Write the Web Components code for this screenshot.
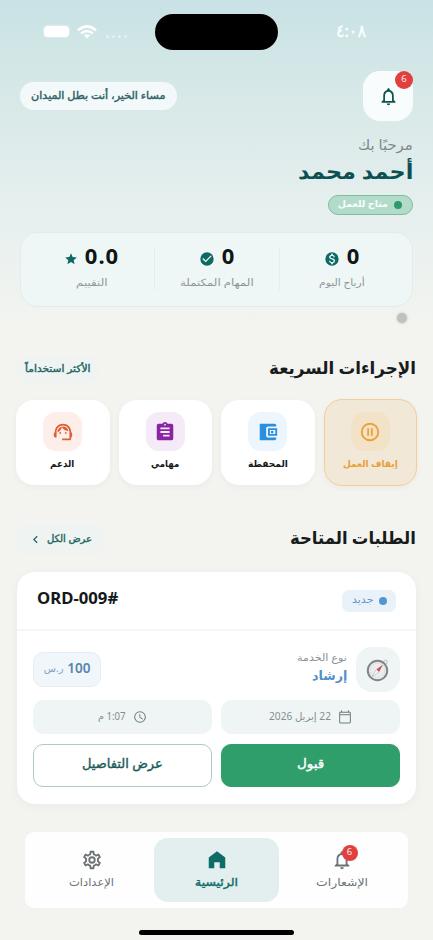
<!DOCTYPE html>
<html lang="ar" dir="rtl">
<head>
<meta charset="utf-8">
<title>الرئيسية</title>
<style>
html,body{margin:0;padding:0}
body{width:433px;height:940px;overflow:hidden;font-family:"Noto Sans","DejaVu Sans",sans-serif}
</style>
</head>
<body>
<worker-app></worker-app>
<script>
const ICONS = {
  bell:'<path d="M12 22c1.1 0 2-.9 2-2h-4c0 1.100.9 2 2 2zm6-6v-5c0-3.070-1.630-5.640-4.500-6.320V4c0-.83-.67-1.500-1.500-1.500s-1.500.67-1.500 1.500v.68C7.640 5.360 6 7.920 6 11v5l-2 2v1h16v-1l-2-2zm-2 1H8v-6c0-2.480 1.510-4.500 4-4.500s4 2.020 4 4.500v6z"/>',
  dollar:'<path fill-rule="evenodd" d="M12 2a10 10 0 1 0 0 20 10 10 0 0 0 0-20zm1.410 16.090V20h-2.670v-1.930c-1.710-.36-3.160-1.460-3.270-3.400h1.960c.1 1.050.82 1.870 2.650 1.870 1.960 0 2.400-.98 2.400-1.590 0-.83-.44-1.610-2.670-2.140-2.480-.6-4.180-1.620-4.180-3.670 0-1.720 1.390-2.840 3.110-3.210V4h2.670v1.950c1.860.45 2.790 1.860 2.850 3.390H14.300c-.05-1.110-.64-1.870-2.220-1.870-1.500 0-2.400.68-2.400 1.640 0 .84.65 1.390 2.670 1.910s4.180 1.390 4.180 3.910c-.01 1.830-1.380 2.830-3.120 3.160z"/>',
  check:'<path fill-rule="evenodd" d="M12 2a10 10 0 1 0 0 20 10 10 0 0 0 0-20zm-2 15l-5-5 1.410-1.410L10 14.170l7.590-7.590L19 8l-9 9z"/>',
  star:'<path d="M12 17.270L18.180 21l-1.640-7.030L22 9.240l-7.190-.61L12 2 9.190 8.630 2 9.240l5.460 4.730L5.820 21z"/>',
  pause:'<path d="M9 16h2V8H9v8zm3-14a10 10 0 1 0 0 20 10 10 0 0 0 0-20zm0 18a8 8 0 1 1 0-16 8 8 0 0 1 0 16zm1-4h2V8h-2v8z"/>',
  wallet:'<path d="M21 18v1c0 1.100-.9 2-2 2H3V3h16c1.100 0 2 .9 2 2v1h-9c-1.110 0-2 .9-2 2v8c0 1.100.89 2 2 2h9z"/><path fill-rule="evenodd" d="M12 8h10v8H12zm2 1.800v4.400h6V9.800z"/><circle cx="16.500" cy="12" r="1.500"/>',
  tasks:'<path fill-rule="evenodd" d="M19 3h-4.180C14.400 1.840 13.300 1 12 1s-2.400.84-2.820 2H5a2 2 0 0 0-2 2v14c0 1.100.9 2 2 2h14a2 2 0 0 0 2-2V5a2 2 0 0 0-2-2zm-7 0a1 1 0 1 1 0 2 1 1 0 0 1 0-2zm5 14h-7v-2h7v2zm0-4H7v-2h10v2zm0-4H7V7h10v2z"/>',
  agent:'<path d="M21 12.220C21 6.730 16.740 3 12 3c-4.690 0-9 3.650-9 9.280-.6.340-1 .98-1 1.720v2c0 1.100.9 2 2 2h1v-6.100c0-3.870 3.130-7 7-7s7 3.130 7 7V19h-8v2h8c1.100 0 2-.9 2-2v-1.220c.59-.31 1-.92 1-1.640v-2.300c0-.7-.41-1.310-1-1.620z"/><circle cx="9" cy="13" r="1"/><circle cx="15" cy="13" r="1"/><path d="M18 11.030C17.520 8.180 15.040 6 12.050 6c-3.030 0-6.290 2.510-6.030 6.450 2.470-1.010 4.330-3.210 4.860-5.890 1.310 2.630 4 4.440 7.120 4.470z"/>',
  chevron:'<path d="M15.410 7.410L14 6l-6 6 6 6 1.410-1.410L10.830 12z"/>',
  calendar:'<path d="M20 3h-1V1h-2v2H7V1H5v2H4a2 2 0 0 0-2 2v16c0 1.100.9 2 2 2h16a2 2 0 0 0 2-2V5a2 2 0 0 0-2-2zm.3 18.300H3.700V9h16.600v12.300zm0-14H3.700V4.800h16.600v2.500z"/>',
  clock:'<path d="M12 2a10 10 0 1 0 0 20 10 10 0 0 0 0-20zm0 18.200a8.200 8.200 0 1 1 0-16.400 8.200 8.200 0 0 1 0 16.400zM12.500 7H11v6l5.200 3.100.8-1.200-4.500-2.700z"/>',
  home:'<path d="M12 2.500L3 9.200V21h6v-6.500h6V21h6V9.200z"/>',
  gear:'<path d="M19.430 12.980c.04-.32.07-.64.07-.98s-.03-.66-.07-.98l2.110-1.650c.19-.15.24-.42.12-.64l-2-3.460a.5.5 0 0 0-.61-.22l-2.490 1a7.300 7.300 0 0 0-1.690-.98l-.38-2.650A.49.49 0 0 0 14 2h-4a.49.49 0 0 0-.49.42l-.38 2.650c-.61.25-1.170.59-1.690.98l-2.490-1a.5.5 0 0 0-.61.22l-2 3.460c-.13.22-.07.49.12.64l2.110 1.650c-.04.32-.07.65-.07.98s.03.66.07.98l-2.110 1.650c-.19.15-.24.42-.12.64l2 3.460c.12.22.39.3.61.22l2.490-1c.52.4 1.080.73 1.690.98l.38 2.650c.03.24.24.42.49.42h4c.25 0 .46-.18.49-.42l.38-2.650c.61-.25 1.170-.59 1.690-.98l2.490 1c.23.09.49 0 .61-.22l2-3.460a.5.5 0 0 0-.12-.64l-2.110-1.650zm-1.980-1.710c.04.31.05.52.05.73s-.02.43-.05.73l-.14 1.130.89.7 1.080.84-.7 1.210-1.270-.51-1.040-.42-.9.680c-.43.320-.84.560-1.250.730l-1.060.430-.16 1.130-.2 1.350h-1.400l-.19-1.350-.16-1.130-1.060-.43c-.43-.18-.83-.41-1.230-.71l-.91-.7-1.060.43-1.270.51-.7-1.210 1.080-.84.89-.7-.14-1.130c-.03-.31-.05-.54-.05-.74s.02-.43.05-.73l.14-1.130-.89-.7-1.080-.84.7-1.210 1.270.51 1.040.42.9-.68c.43-.32.84-.56 1.250-.73l1.060-.43.16-1.130.2-1.350h1.390l.19 1.350.16 1.130 1.060.43c.43.18.83.41 1.230.71l.91.7 1.060-.43 1.270-.51.7 1.210-1.070.85-.89.7.14 1.130zM12 8a4 4 0 1 0 0 8 4 4 0 0 0 0-8zm0 6a2 2 0 1 1 0-4 2 2 0 0 1 0 4z"/>'
};

class Base extends HTMLElement {
  mount(html){ this.attachShadow({mode:'open'}).innerHTML = html; }
  a(n,d=''){ return this.getAttribute(n) ?? d; }
}

/* Icon by name, drawn in the current colour. */
customElements.define('ui-icon', class extends Base {
  connectedCallback(){
    const s=this.a('size','18');
    this.mount(`<style>:host{display:block;flex:none;width:${s}px;height:${s}px}svg{display:block;width:100%;height:100%;fill:currentColor}</style><svg viewBox="0 0 24 24">${ICONS[this.a('name')]}</svg>`);
  }
});

/* One line of text condensed or widened to a given width; weight "medium" is regular with a thin outline. */
customElements.define('fit-text', class extends Base {
  connectedCallback(){
    const w=+this.a('w'), s=+this.a('size','12'), wt=this.a('weight','400'), med=wt==='medium';
    this.mount(`<style>:host{display:block;flex:none;width:${w}px;height:${Math.round(s*1.5)}px;font-size:${s}px;line-height:${Math.round(s*1.5)}px;font-weight:${med?400:wt};color:${this.a('color','inherit')}}
    span{display:inline-block;white-space:nowrap;transform-origin:100% 50%;${med?'-webkit-text-stroke:.4px currentColor':''}}</style><span><slot></slot></span>`);
    const fit=()=>{const sp=this.shadowRoot.querySelector('span');const n=sp.offsetWidth;if(n)sp.style.transform=`scaleX(${w/n})`;};
    requestAnimationFrame(fit); fit();
  }
});

customElements.define('status-bar', class extends Base {
  connectedCallback(){ this.mount(`<style>
    :host{display:grid;grid-template-columns:155px 123px 155px;direction:ltr;height:71px;box-sizing:border-box;padding-top:14px;color:#fff}
    .l{display:flex;align-items:center;padding-left:44px;height:35px}
    .bat{width:23px;height:9px;border-radius:4px;background:#fff;border:1px solid #ffffffb0;box-shadow:0 0 2px #fff}
    svg{margin-left:8px}
    .dots{display:flex;gap:3px;margin:9px 0 0 9px}.dots i{width:3px;height:3px;border-radius:50%;background:#ffffff70}
    .island{background:#000;border-radius:18px;height:36px}
    .r{padding:4px 0 0 58px;direction:rtl;display:flex;justify-content:flex-end}
    </style>
    <div class="l"><div class="bat"></div><svg width="20" height="14" viewBox="0 0 20 14" fill="none" stroke="#fff" stroke-width="2.600"><path d="M1 5.200Q10-2.600 19 5.200M4.200 8.400Q10 3.600 15.800 8.400"/><path d="M10 13.500L6.900 10.300Q10 8 13.100 10.300z" fill="#fff" stroke="none"/></svg><div class="dots"><i></i><i></i><i></i><i></i></div></div>
    <div class="island"></div>
    <div class="r"><fit-text w="30" size="17" weight="medium">٤:٠٨</fit-text></div>`); }
});

customElements.define('count-badge', class extends Base {
  connectedCallback(){ const s=this.a('size','18'); this.mount(`<style>:host{display:flex;justify-content:center;width:${s}px;height:${s}px;border-radius:50%;background:#e0413f;color:#ffe9e6;font-size:9.500px;line-height:${s-3}px}</style><slot></slot>`); }
});

customElements.define('app-header', class extends Base {
  connectedCallback(){ this.mount(`<style>
    :host{display:block;padding:0 20px;height:161px}
    .top{display:flex;justify-content:space-between;align-items:center;height:50px}
    .bell{position:relative;width:50px;height:50px;border-radius:17px;background:#f8fcfd;display:grid;place-items:center;color:#0c5450}
    count-badge{position:absolute;top:0;right:0}
    .greet{width:157px;height:28px;border-radius:14px;background:#f3f9fb;display:flex;justify-content:center;align-items:center;box-sizing:border-box;padding-bottom:2px}
    .hi{margin-top:13px}.name{margin-top:0}
    .pill{margin-top:8px;width:85px;height:20px;box-sizing:border-box;border:1px solid #7fbda0;border-radius:10px;background:#b3dbc9;display:flex;align-items:center;padding-right:10px;gap:6px}
    .pill i{width:8px;height:8px;border-radius:50%;background:#2f9a6b}.pill fit-text{margin-top:-2px}
    </style>
    <div class="top"><div class="bell"><ui-icon name="bell" size="21"></ui-icon><count-badge>6</count-badge></div>
    <div class="greet"><fit-text w="134" size="10.500" weight="medium" color="#2e6264">مساء الخير، أنت بطل الميدان</fit-text></div></div>
    <fit-text class="hi" w="55" size="14" color="#7f898b">مرحبًا بك</fit-text>
    <fit-text class="name" w="115" size="21" weight="700" color="#0d4f52">أحمد محمد</fit-text>
    <div class="pill"><i></i><fit-text w="50" size="9.500" weight="700" color="#f4fffa">متاح للعمل</fit-text></div>`); }
});

customElements.define('stat-item', class extends Base {
  connectedCallback(){ this.mount(`<style>
    :host{display:flex;flex-direction:column;align-items:center;height:42px}
    .v{display:flex;align-items:center;justify-content:center;gap:6px;height:22px;margin-top:-4px}
    ui-icon{color:#0c6a63;margin-top:7px}.n{font:700 22px/22px "Noto Sans",sans-serif;color:#101516;letter-spacing:1px;padding-left:1px}
    fit-text{margin-top:9px}
    </style><div class="v"><span class="n">${this.a('value')}</span><ui-icon name="${this.a('icon')}" size="${this.a('isize','15')}"></ui-icon></div>
    <fit-text w="${this.a('w')}" size="10" color="#8c9799">${this.a('label')}</fit-text>`); }
});

customElements.define('stats-card', class extends Base {
  connectedCallback(){ this.mount(`<style>
    :host{display:grid;grid-template-columns:repeat(3,1fr);margin:0 20px;height:75px;box-sizing:border-box;padding:15px 8px 0;border:1px solid #e3ecec;border-radius:18px;background:#eff6f6}
    ::slotted(*:not(:last-child)){border-left:1px solid #e4ecec}
    </style><slot></slot>`); }
});

customElements.define('section-head', class extends Base {
  connectedCallback(){ const ch=this.a('chevron'); this.mount(`<style>
    :host{display:flex;justify-content:space-between;align-items:center;height:31px;padding:0 17px}
    .title{margin-top:${ch?-5:-4}px}
    .chip{display:flex;align-items:center;justify-content:center;gap:4px;width:${ch?86:82}px;height:${ch?31:26}px;border-radius:9px;background:#eff4f3;color:#226664}
    .chip fit-text{margin-top:${ch?-2:-1}px}
    </style><fit-text class="title" w="${this.a('w')}" size="17.500" weight="700" color="#171b1c">${this.a('title')}</fit-text>
    <div class="chip"><fit-text w="${this.a('aw')}" size="10" weight="medium">${this.a('action')}</fit-text>${ch?'<ui-icon name="chevron" size="15"></ui-icon>':''}</div>`); }
});

customElements.define('action-tile', class extends Base {
  connectedCallback(){ const on=this.hasAttribute('active'); this.mount(`<style>
    :host{display:flex;flex-direction:column;align-items:center;height:${on?87:85}px;box-sizing:border-box;padding-top:12px;border-radius:18px;
      background:${on?'#f2e8d7':'#fff'};${on?'border:1.500px solid #f3cf98;margin-top:-1px;':''}box-shadow:0 2px 6px #0000000a}
    .i{width:39px;height:39px;border-radius:13px;display:grid;place-items:center;background:${this.a('tint')};color:${this.a('tone')}}
    fit-text{margin-top:6px}
    </style><div class="i"><ui-icon name="${this.a('icon')}" size="${this.a('isize','22')}"></ui-icon></div>
    <fit-text w="${this.a('w')}" size="9.500" weight="700" color="${on?'#e7a13a':'#15191a'}">${this.a('label')}</fit-text>`); }
});

customElements.define('action-grid', class extends Base {
  connectedCallback(){ this.mount(`<style>:host{display:grid;grid-template-columns:repeat(4,1fr);gap:9px;margin:16px 16px 0 16px;height:86px;align-items:start}</style><slot></slot>`); }
});

/* Tinted box that holds an icon and a line of text. */
customElements.define('meta-box', class extends Base {
  connectedCallback(){ this.mount(`<style>:host{display:flex;align-items:center;justify-content:center;gap:7px;height:34px;border-radius:11px;background:#eff5f5;color:#70787a}fit-text{margin-top:-2px}</style>
    <ui-icon name="${this.a('icon')}" size="14"></ui-icon><fit-text w="${this.a('w')}" size="10" color="#858d90">${this.a('label')}</fit-text>`); }
});

customElements.define('ui-button', class extends Base {
  connectedCallback(){ const p=this.hasAttribute('primary'); this.mount(`<style>:host{display:flex;align-items:center;justify-content:center;height:43px;box-sizing:border-box;padding-bottom:4px;border-radius:10px;border:1px solid ${p?'#2f9e6a':'#b3c7c7'};background:${p?'#2f9e6a':'#fff'};color:${p?'#fff':'#1c5c5a'}}</style>
    <fit-text w="${this.a('w')}" size="12.500" weight="medium">${this.a('label')}</fit-text>`); }
});

customElements.define('order-card', class extends Base {
  connectedCallback(){ this.mount(`<style>
    :host{display:block;margin:17px 17px 0;height:232px;border-radius:18px;background:#fff;box-shadow:0 2px 10px #0000000b}
    .h{display:flex;justify-content:space-between;align-items:center;height:59px;box-sizing:border-box;padding:0 20px;border-bottom:2px solid #f4f6f6}
    .tag{display:flex;align-items:center;gap:6px;width:54px;height:22px;border-radius:7px;background:#eaf2f9;box-sizing:border-box;padding-right:9px}
    .tag i{width:8px;height:8px;border-radius:50%;background:#5596d0}.tag fit-text{margin-top:-2px}
    .h>fit-text{margin-top:-6px}
    .s{display:flex;height:45px;padding:0 16px;margin-top:16px;align-items:center}
    .c{width:44px;height:45px;border-radius:16px;background:#eff4f4;display:grid;place-items:center}
    .t{margin:-4px 9px 0 auto;flex:1}.t fit-text+fit-text{margin-top:0}
    .p{display:flex;align-items:center;justify-content:center;gap:4px;width:68px;height:35px;box-sizing:border-box;border:1px solid #e5edf5;border-radius:10px;background:#f1f6fb;color:#5386ad;padding-bottom:3px}
    .g{display:grid;grid-template-columns:1fr 1fr;gap:9px;padding:0 16px;margin-top:8px}.g+.g{margin-top:10px}
    </style>
    <div class="h"><div class="tag"><i></i><fit-text w="21" size="10" color="#5f95c4">جديد</fit-text></div><fit-text w="81" size="16.500" weight="700" color="#15191a">#ORD-009</fit-text></div>
    <div class="s"><div class="c"><svg width="24" height="24" viewBox="0 0 24 24"><circle cx="19.500" cy="4" r="1.800" fill="none" stroke="#bcc1c3"/><circle cx="11.500" cy="12.500" r="9.700" fill="#e9eded" stroke="#818589" stroke-width="2"/><circle cx="11.500" cy="12.500" r="7.300" fill="none" stroke="#ccd1d3" stroke-dasharray="1 1.500"/><path d="M17 6.500L13 14l-2.700-2.600z" fill="#d94a50"/><path d="M6 18.500l4.300-7.100L13 14z" fill="#fafafa" stroke="#a4a6a8" stroke-width=".5"/></svg></div>
    <div class="t"><fit-text w="50" size="10" color="#899296">نوع الخدمة</fit-text><fit-text w="35" size="13" weight="700" color="#5290c8">إرشاد</fit-text></div>
    <div class="p"><fit-text w="23" size="13.500" weight="600">100</fit-text><fit-text w="20" size="10" color="#7ba2c1">ر.س</fit-text></div></div>
    <div class="g"><meta-box icon="calendar" w="62" label="22 إبريل 2026"></meta-box><meta-box icon="clock" w="28" label="1:07 م"></meta-box></div>
    <div class="g"><ui-button primary w="27" label="قبول"></ui-button><ui-button w="81" label="عرض التفاصيل"></ui-button></div>`); }
});

customElements.define('nav-tab', class extends Base {
  connectedCallback(){ const on=this.hasAttribute('active'), b=this.a('badge'); this.mount(`<style>
    :host{display:flex;flex-direction:column;align-items:center;height:64px;box-sizing:border-box;padding-top:11px;border-radius:14px;color:${on?'#0d6c67':'#6b7375'};background:${on?'#e3eeee':'transparent'}}
    .i{position:relative}count-badge{position:absolute;left:11px;top:-4px}fit-text{margin-top:2px}
    </style><div class="i"><ui-icon name="${this.a('icon')}" size="22"></ui-icon>${b?`<count-badge size="16">${b}</count-badge>`:''}</div>
    <fit-text w="${this.a('w')}" size="11" weight="${on?'medium':400}">${this.a('label')}</fit-text>`); }
});

customElements.define('bottom-nav', class extends Base {
  connectedCallback(){ this.mount(`<style>:host{display:grid;grid-template-columns:repeat(3,1fr);margin:28px 25px 0;height:76px;box-sizing:border-box;padding:6px 4px;border-radius:9px;background:#fefefe}</style><slot></slot>`); }
});

customElements.define('worker-app', class extends Base {
  connectedCallback(){ this.mount(`<style>
    :host{display:block;width:433px;height:940px;background:linear-gradient(#c9e2e5 0,#d6e8e7 90px,#e7f0ef 220px,#f3f4f0 330px)}
    .dot{width:10px;height:10px;margin:6px 26px 0 0;border-radius:50%;background:#bfc1c0;box-shadow:0 0 2px 1px #d9dbd9}
    .first{margin-top:30px}.second{margin-top:38px}
    .home{width:155px;height:5px;border-radius:3px;background:#000;margin:22px auto 0}
    </style>
    <status-bar></status-bar>
    <app-header></app-header>
    <stats-card>
      <stat-item value="0" icon="dollar" isize="16" label="أرباح اليوم" w="46"></stat-item>
      <stat-item value="0" icon="check" isize="16" label="المهام المكتملة" w="74"></stat-item>
      <stat-item value="0.0" icon="star" isize="14" label="التقييم" w="32"></stat-item>
    </stats-card>
    <div class="dot"></div>
    <section-head class="first" title="الإجراءات السريعة" w="147" action="الأكثر استخداماً" aw="65"></section-head>
    <action-grid>
      <action-tile active icon="pause" tint="#f2e2c8" tone="#eba22f" label="إيقاف العمل" w="55"></action-tile>
      <action-tile icon="wallet" tint="#edf6fd" tone="#2b8fe0" label="المحفظة" w="40"></action-tile>
      <action-tile icon="tasks" tint="#f4eaf8" tone="#8a24a4" label="مهامي" w="28"></action-tile>
      <action-tile icon="agent" tint="#feeee9" tone="#dc6134" label="الدعم" w="24"></action-tile>
    </action-grid>
    <section-head class="second" chevron="1" title="الطلبات المتاحة" w="126" action="عرض الكل" aw="45"></section-head>
    <order-card></order-card>
    <bottom-nav>
      <nav-tab icon="bell" badge="6" label="الإشعارات" w="52"></nav-tab>
      <nav-tab active icon="home" label="الرئيسية" w="43"></nav-tab>
      <nav-tab icon="gear" label="الإعدادات" w="45"></nav-tab>
    </bottom-nav>
    <div class="home"></div>`); }
});
</script>
</body>
</html>
